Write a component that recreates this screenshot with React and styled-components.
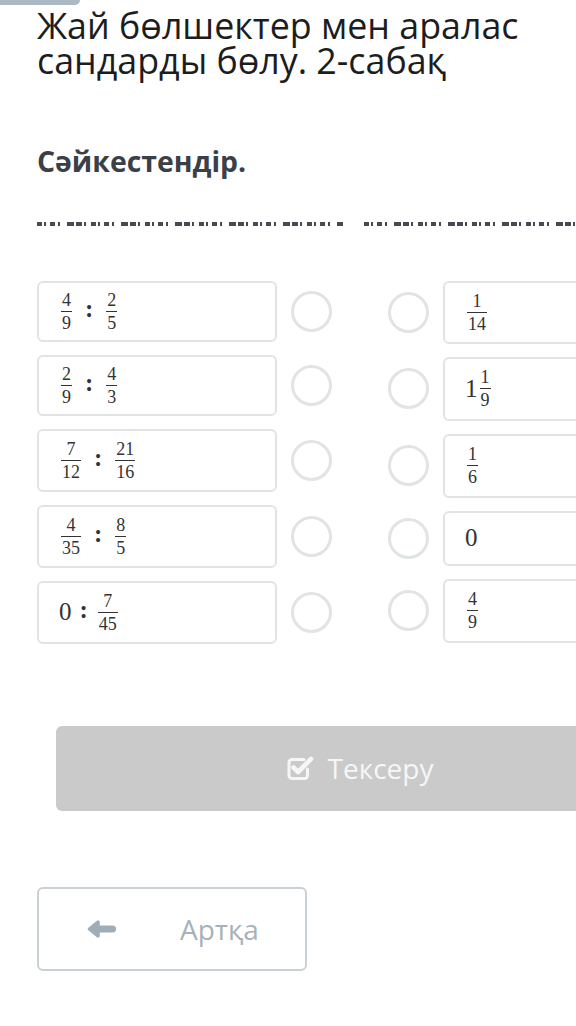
import React from "react";
import styled, { createGlobalStyle } from "styled-components";

const Global = createGlobalStyle`
  html, body { margin: 0; padding: 0; background: #ffffff; overflow: hidden; }
  body { font-family: "Open Sans", "Noto Sans", sans-serif; }
  * { box-sizing: border-box; }
`;

const Page = styled.div`
  width: 576px;
  min-height: 1026px;
  overflow: hidden;
  display: flex;
  flex-direction: column;
`;

const TopTab = styled.div`
  width: 80px;
  height: 5px;
  background: #aab9c3;
  border-bottom-right-radius: 6px;
`;

const Content = styled.div`
  padding-left: 37px;
  display: flex;
  flex-direction: column;
  width: 700px;
`;

const Title = styled.h1`
  margin: 3px 0 0;
  font-size: 35.8px;
  line-height: 35px;
  font-weight: 400;
  color: #1d1d1d;
  width: 520px;
`;

const Subtitle = styled.h2`
  margin: 67px 0 0;
  font-size: 28.4px;
  line-height: 33.6px;
  font-weight: 700;
  color: #3b3f47;
`;

const DashRow = styled.div`
  margin-top: 43px;
  display: flex;
  gap: 21px;
  height: 4px;
`;

const DashSeg = styled.div`
  width: ${(p) => p.$w}px;
  height: 4px;
  background: repeating-linear-gradient(
    90deg,
    #464a52 0 5px,
    transparent 5px 7px,
    #464a52 7px 9px,
    transparent 9px 13px,
    #464a52 13px 18px,
    transparent 18px 21px,
    #464a52 21px 23px,
    transparent 23px 30px,
    #464a52 30px 37px,
    transparent 37px 39px,
    #464a52 39px 45px,
    transparent 45px 47px,
    #464a52 47px 49px,
    transparent 49px 54px
  );
`;

const Columns = styled.div`
  margin-top: 55px;
  display: flex;
  gap: 56px;
  align-items: flex-start;
`;

const Column = styled.div`
  display: flex;
  flex-direction: column;
  gap: 13px;
`;

const Row = styled.div`
  display: flex;
  align-items: center;
  gap: 14px;
`;

const Card = styled.div`
  width: 240px;
  height: ${(p) => p.$h}px;
  border: 2px solid #e3e3e3;
  border-radius: 6px;
  background: #fff;
  display: flex;
  align-items: center;
  padding-left: ${(p) => p.$pad}px;
`;

const Circle = styled.div`
  width: 41px;
  height: 41px;
  flex: 0 0 41px;
  border-radius: 50%;
  border: 3px solid #e1e4e5;
`;

const Expr = styled.div`
  display: flex;
  align-items: center;
  gap: ${(p) => p.$gap ?? 11}px;
  font-family: "Liberation Serif", "DejaVu Serif", serif;
  color: #333333;
`;

const FracBox = styled.span`
  display: inline-flex;
  flex-direction: column;
  align-items: stretch;
  text-align: center;
  font-size: 18px;
  line-height: 16px;
  margin: 0 2px;
`;

const Num = styled.span`
  display: block;
  padding: 0 1px 3px;
  border-bottom: 1px solid #333;
`;

const Den = styled.span`
  display: block;
  padding: 3px 1px 0;
`;

const Big = styled.span`
  font-size: 25px;
  line-height: 24px;
`;

const Colon = styled.span`
  font-size: 25px;
  line-height: 24px;
  padding-bottom: 4px;
  font-weight: 700;
`;

const Frac = ({ n, d }) => (
  <FracBox>
    <Num>{n}</Num>
    <Den>{d}</Den>
  </FracBox>
);

const CheckButton = styled.button`
  margin: 82px 0 0 19px;
  width: 608px;
  height: 85px;
  border: none;
  border-radius: 6px;
  background: #cacaca;
  color: #f6f6f6;
  font-family: "Open Sans", sans-serif;
  font-size: 28px;
  display: flex;
  align-items: center;
  justify-content: center;
  gap: 14px;
  padding: 0;
`;

const BackButton = styled.button`
  margin-top: 76px;
  width: 270px;
  height: 84px;
  border: 2px solid #c9d1d6;
  border-radius: 6px;
  background: #fff;
  color: #a6b2ba;
  font-family: "Open Sans", sans-serif;
  font-size: 28px;
  display: flex;
  align-items: center;
  padding: 0 0 0 48px;
  gap: 64px;
`;

const CheckIcon = () => (
  <svg width="27" height="26" viewBox="0 0 27 26" fill="none">
    <path
      d="M17 4.5 H5 a3 3 0 0 0 -3 3 V20.5 a3 3 0 0 0 3 3 H17.5 a3 3 0 0 0 3 -3 V14"
      stroke="#f6f6f6"
      strokeWidth="3"
      strokeLinecap="round"
    />
    <path
      d="M6.5 12.5 L11 17 L24 4"
      stroke="#f6f6f6"
      strokeWidth="4.6"
      strokeLinecap="round"
      strokeLinejoin="round"
    />
  </svg>
);

const ArrowIcon = () => (
  <svg width="29" height="18" viewBox="0 0 29 18" fill="none">
    <path
      d="M2.5 9 L11 2 V16 Z"
      fill="#9dadb9"
      stroke="#9dadb9"
      strokeWidth="3.5"
      strokeLinejoin="round"
    />
    <path d="M10 9 H25.5" stroke="#9dadb9" strokeWidth="7" strokeLinecap="round" />
  </svg>
);

const left = [
  { h: 61, expr: [<Frac key="a" n="4" d="9" />, <Colon key="c">:</Colon>, <Frac key="b" n="2" d="5" />] },
  { h: 61, expr: [<Frac key="a" n="2" d="9" />, <Colon key="c">:</Colon>, <Frac key="b" n="4" d="3" />] },
  { h: 63, expr: [<Frac key="a" n="7" d="12" />, <Colon key="c">:</Colon>, <Frac key="b" n="21" d="16" />] },
  { h: 63, expr: [<Frac key="a" n="4" d="35" />, <Colon key="c">:</Colon>, <Frac key="b" n="8" d="5" />] },
  { h: 63, gap: 8, expr: [<Big key="z">0</Big>, <Colon key="c">:</Colon>, <Frac key="b" n="7" d="45" />] },
];

const right = [
  { h: 63, expr: [<Frac key="a" n="1" d="14" />] },
  { h: 64, gap: 0, expr: [<Big key="o">1</Big>, <Frac key="a" n="1" d="9" />] },
  { h: 64, expr: [<Frac key="a" n="1" d="6" />] },
  { h: 55, expr: [<Big key="z">0</Big>] },
  { h: 64, expr: [<Frac key="a" n="4" d="9" />] },
];

export default function App() {
  return (
    <>
      <Global />
      <Page>
        <TopTab />
        <Content>
          <Title>Жай бөлшектер мен аралас сандарды бөлу. 2-сабақ</Title>
          <Subtitle>Сәйкестендір.</Subtitle>
          <DashRow>
            <DashSeg $w={306} />
            <DashSeg $w={330} />
          </DashRow>
          <Columns>
            <Column>
              {left.map((r, i) => (
                <Row key={i}>
                  <Card $h={r.h} $pad={20}>
                    <Expr $gap={r.gap}>{r.expr}</Expr>
                  </Card>
                  <Circle />
                </Row>
              ))}
            </Column>
            <Column>
              {right.map((r, i) => (
                <Row key={i}>
                  <Circle />
                  <Card $h={r.h} $pad={20}>
                    <Expr $gap={r.gap}>{r.expr}</Expr>
                  </Card>
                </Row>
              ))}
            </Column>
          </Columns>
          <CheckButton>
            <CheckIcon />
            <span>Тексеру</span>
          </CheckButton>
          <BackButton>
            <ArrowIcon />
            <span>Артқа</span>
          </BackButton>
        </Content>
      </Page>
    </>
  );
}
